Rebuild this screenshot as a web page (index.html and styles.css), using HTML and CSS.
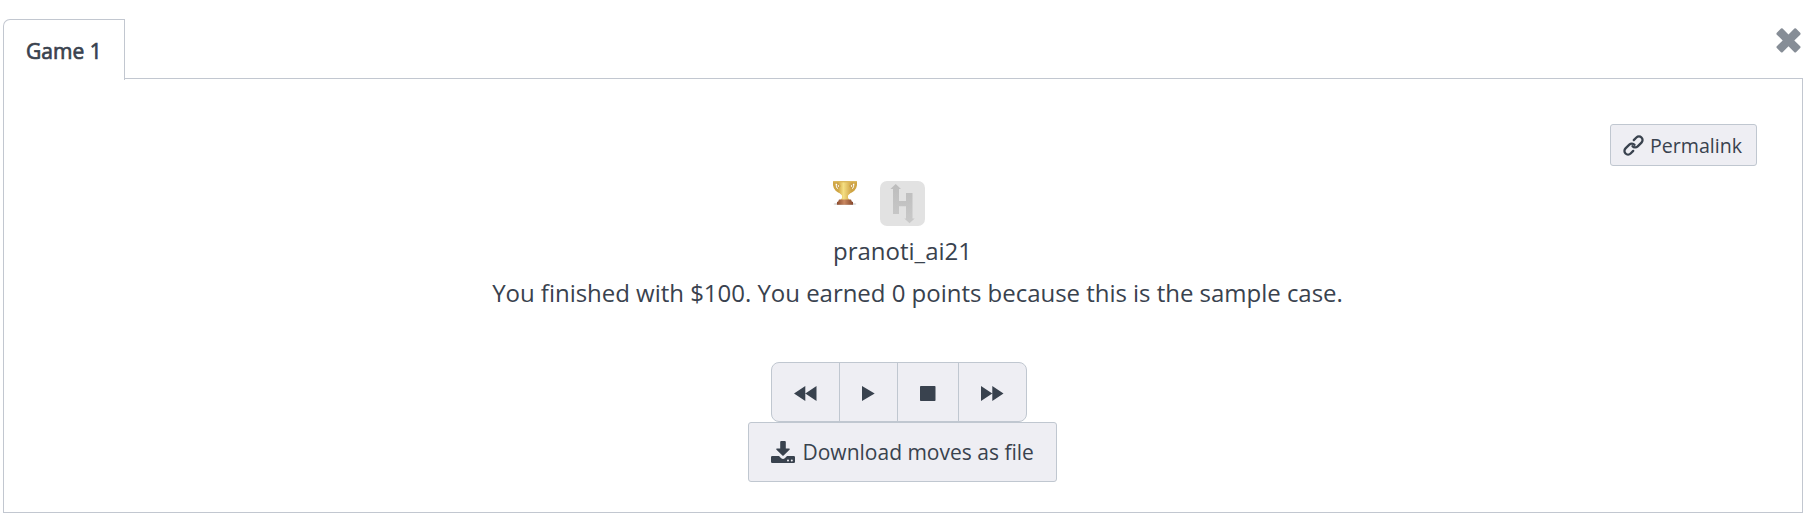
FILE: index.html
```
<!DOCTYPE html>
<html lang="en">
<head>
<meta charset="utf-8">
<title>Game 1</title>
<link rel="stylesheet" href="styles.css">
</head>
<body>
<div class="viewer">
  <header class="tabs">
    <div class="tab">Game 1</div>
    <div class="rule"></div>
    <svg class="close" viewBox="0 0 25 25"><path d="M5 0.6Q5.8 0 6.6 0.6L12.5 6.6L18.4 0.6Q19.2 0 20 0.6L24.2 4.8Q25 5.8 24.2 6.7L18.3 12.4L24.2 18.2Q25 19 24.2 20L20 24.2Q19.2 24.9 18.4 24.2L12.5 18.2L6.600 24.2Q5.800 24.9 5 24.2L0.8 20Q0 19 0.8 18.2L6.700 12.4L0.8 6.700Q0 5.800 0.8 4.800Z"/></svg>
  </header>
  <main class="panel">
    <div class="actions">
      <button class="btn permalink">
        <svg class="link" viewBox="0 0 19 19"><g transform="rotate(-45 9.500 9.500)" fill="none" stroke="#39424e" stroke-width="2.300" stroke-linecap="round"><path d="M5.500 13.100H1.800A3.600 3.600 0 0 1 1.800 5.900H7.200A3.600 3.600 0 0 1 10.700 9.700"/><path d="M13.500 5.900H17.200A3.600 3.600 0 0 1 17.200 13.100H11.800A3.600 3.600 0 0 1 8.300 9.300"/></g></svg>
        <span>Permalink</span>
      </button>
    </div>
    <div class="player">
      <svg class="trophy" viewBox="0 0 24 24">
        <defs>
          <linearGradient id="gold"><stop offset="0" stop-color="#c99a35"/><stop offset=".4" stop-color="#f5df83"/><stop offset="1" stop-color="#c8983a"/></linearGradient>
          <linearGradient id="base"><stop offset="0" stop-color="#8b4a2c"/><stop offset=".45" stop-color="#c98860"/><stop offset="1" stop-color="#84452a"/></linearGradient>
        </defs>
        <ellipse cx="12" cy="23" rx="11.5" ry="1" fill="#ccc"/>
        <path d="M6 1.500H1.200Q1 6.500 3.500 8.700Q5.500 10.500 8.500 11.500M18 1.500H22.800Q23 6.500 20.500 8.700Q18.500 10.500 15.500 11.500" fill="none" stroke="#cfa544" stroke-width="2.600"/>
        <path d="M4 0H20Q20 11.500 15 14.500V17L17.500 20H6.500L9 17V14.500Q4 11.500 4 0Z" fill="url(#gold)"/>
        <path d="M.5 .7H23.500" stroke="#dcb85c" stroke-width="1.400"/>
        <circle cx="5.500" cy="5" r="1.400" fill="#fff4d4" stroke="#b8872b" stroke-width=".8"/>
        <circle cx="18.500" cy="5" r="1.400" fill="#fff4d4" stroke="#b8872b" stroke-width=".8"/>
        <path d="M6 18.500H18L18.800 20.500L20 21V23.700H4V21L5.200 20.500Z" fill="url(#base)"/>
      </svg>
      <svg class="avatar" viewBox="0 0 45 45">
        <defs><linearGradient id="mark" x2="0" y2="1"><stop offset="0" stop-color="#bdbdbd"/><stop offset="1" stop-color="#c9c9c9"/></linearGradient></defs>
        <rect width="45" height="45" rx="7" fill="#e2e2e2"/>
        <path d="M15.700 3L21 8H19V20H26V12H32.500V37.500H34.700L29.500 42.300L24.300 37.500H26V25.200H19V33H13V8H10.400Z" fill="url(#mark)"/>
      </svg>
    </div>
    <div class="name">pranoti_ai21</div>
    <div class="message">You finished with $100. You earned 0 points because this is the sample case.</div>
    <div class="controls">
      <button class="step wide"><svg class="i-wide" viewBox="0 0 23 15"><path d="M11.300 0V15L0 7.500ZM22.500 0V15L11.300 7.500Z"/></svg></button>
      <button class="step play"><svg class="i-play" viewBox="0 0 13 15"><path d="M0 0L12.700 7.500L0 15Z"/></svg></button>
      <button class="step stop"><svg class="i-stop" viewBox="0 0 16 15"><rect width="15.500" height="15" rx=".8"/></svg></button>
      <button class="step last"><svg class="i-wide" viewBox="0 0 23 15"><path d="M0 0L11.300 7.500L0 15ZM11.300 0L22.500 7.500L11.300 15Z"/></svg></button>
    </div>
    <button class="btn download">
      <svg class="disk" viewBox="0 0 24 22"><path fill-rule="evenodd" d="M10.200 0H13.800Q14.800 0 14.800 1V7.500H18.200Q19.400 7.700 18.500 8.700L12.600 14.600Q12 15.100 11.400 14.600L5.500 8.700Q4.600 7.700 5.800 7.500H9.200V1Q9.200 0 10.200 0ZM1.200 15H8L10.200 17.200Q12 18.600 13.800 17.200L16 15H22.800Q24 15 24 16.200V20.800Q24 22 22.800 22H1.200Q0 22 0 20.800V16.200Q0 15 1.200 15ZM17 18.500a1 1 0 1 0 0 2a1 1 0 1 0 0-2ZM20.800 18.500a1 1 0 1 0 0 2a1 1 0 1 0 0-2Z"/></svg>
      <span>Download moves as file</span>
    </button>
  </main>
</div>
</body>
</html>
```
FILE: styles.css
```
* { box-sizing: border-box; }
body {
  margin: 0;
  background: #fff;
  color: #39424e;
  font-family: "Open Sans", sans-serif;
}
svg { display: block; flex: none; fill: #39424e; }
button { margin: 0; font: inherit; color: inherit; padding: 0; }
.viewer { width: 1800px; margin-left: 3px; padding-top: 19px; }
.tabs { display: flex; height: 60px; }
.tab {
  width: 122px;
  height: 61px;
  border: 1px solid #c2c7d0;
  border-bottom: 0;
  border-radius: 7px 0 0 0;
  padding-left: 22px;
  font-size: 21px;
  -webkit-text-stroke: 0.7px #39424e;
  line-height: 63px;
}
.rule { flex: 1; border-bottom: 1px solid #c2c7d0; }
.close { width: 25px; height: 25px; margin: 9px 2px 0 -27px; fill: #868d96; }
.panel {
  display: flex;
  flex-direction: column;
  align-items: center;
  height: 434px;
  border: 1px solid #c2c7d0;
  border-top: 0;
}
.btn {
  display: flex;
  align-items: center;
  background: #eeeef3;
  border: 1px solid #c0c7d0;
  border-radius: 3px;
}
.actions { align-self: stretch; display: flex; justify-content: flex-end; padding: 45px 45px 0 0; }
.permalink { width: 147px; height: 42px; padding-left: 13px; font-size: 19.600px; gap: 7px; }
.link { width: 19px; height: 19px; overflow: visible; }
.player { display: flex; gap: 23px; margin: 15px 0 0 -49px; }
.trophy { width: 24px; height: 24px; }
.avatar { width: 45px; height: 45px; }
.name { margin: 4px 0 0 -1px; font-size: 24px; line-height: 42px; }
.message { margin-left: 29px; font-size: 24px; line-height: 42px; letter-spacing: -0.025px; }
.controls {
  display: flex;
  width: 256px;
  height: 60px;
  margin: 48px 0 0 -9px;
  border: 1px solid #c0c7d0;
  border-radius: 8px;
  background: #eeeef3;
}
.step {
  display: flex;
  align-items: center;
  justify-content: center;
  padding-top: 2px;
  border: 0;
  border-right: 1px solid #c0c7d0;
  background: none;
}
.wide { width: 68px; }
.play { width: 58px; }
.stop { width: 61px; }
.last { flex: 1; border-right: 0; }
.i-wide { width: 23px; height: 15px; }
.i-play { width: 13px; height: 15px; }
.i-stop { width: 16px; height: 15px; }
.download { width: 309px; height: 60px; margin-left: -2px; padding: 0 0 0 22px; font-size: 21px; gap: 8px; }
.disk { width: 24px; height: 22px; }
```
